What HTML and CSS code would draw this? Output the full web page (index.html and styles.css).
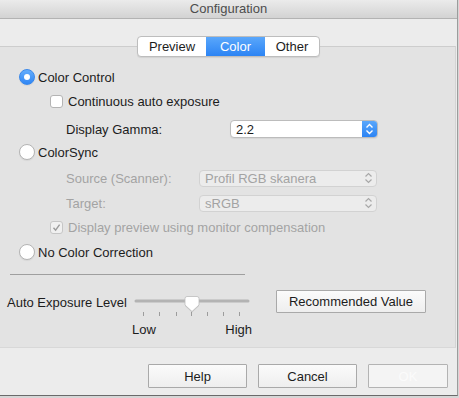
FILE: index.html
```html
<!DOCTYPE html>
<html lang="en">
<head>
    <meta charset="UTF-8">
    <title>Configuration</title>
    <link rel="stylesheet" href="styles.css">
</head>
<body>
    <div class="window">
        <div class="titlebar">Configuration</div>

        <div class="tabbar">
            <div class="tab tab-preview">Preview</div>
            <div class="tab tab-color active">Color</div>
            <div class="tab tab-other">Other</div>
        </div>

        <div class="panel">
            <div class="options">
                <div class="row r1">
                    <span class="radio checked"></span>
                    <span class="label">Color Control</span>
                </div>
                <div class="row r2 indent">
                    <span class="checkbox"></span>
                    <span class="label">Continuous auto exposure</span>
                </div>
                <div class="row r3 sub">
                    <span class="field-label gamma-label">Display Gamma:</span>
                    <div class="popup popup-gamma">
                        <span class="popup-text">2.2</span>
                        <span class="popup-arrows blue">
                            <svg width="9" height="12" viewBox="0 0 9 12"><path d="M1.5 4.5 L4.5 1.5 L7.5 4.5 M1.5 7.5 L4.5 10.5 L7.5 7.5" fill="none" stroke="#fff" stroke-width="1.4"/></svg>
                        </span>
                    </div>
                </div>
                <div class="row r4">
                    <span class="radio"></span>
                    <span class="label">ColorSync</span>
                </div>
                <div class="row r5 sub disabled">
                    <span class="field-label sync-label">Source (Scanner):</span>
                    <div class="popup popup-sync">
                        <span class="popup-text">Profil RGB skanera</span>
                        <span class="popup-arrows">
                            <svg width="9" height="12" viewBox="0 0 9 12"><path d="M1.5 4.5 L4.5 1.5 L7.5 4.5 M1.5 7.5 L4.5 10.5 L7.5 7.5" fill="none" stroke="#a8a8a8" stroke-width="1.2"/></svg>
                        </span>
                    </div>
                </div>
                <div class="row r6 sub disabled">
                    <span class="field-label sync-label">Target:</span>
                    <div class="popup popup-sync">
                        <span class="popup-text">sRGB</span>
                        <span class="popup-arrows">
                            <svg width="9" height="12" viewBox="0 0 9 12"><path d="M1.5 4.5 L4.5 1.5 L7.5 4.5 M1.5 7.5 L4.5 10.5 L7.5 7.5" fill="none" stroke="#a8a8a8" stroke-width="1.2"/></svg>
                        </span>
                    </div>
                </div>
                <div class="row r7 indent disabled">
                    <span class="checkbox checked">
                        <svg width="11" height="11" viewBox="0 0 11 11"><path d="M2.5 5.8 L4.6 8.2 L8.6 2.6" fill="none" stroke="#9a9a9a" stroke-width="1.4"/></svg>
                    </span>
                    <span class="label">Display preview using monitor compensation</span>
                </div>
                <div class="row r8">
                    <span class="radio"></span>
                    <span class="label">No Color Correction</span>
                </div>
            </div>

            <div class="separator"></div>

            <div class="exposure">
                <span class="exposure-label">Auto Exposure Level</span>
                <svg class="slider" width="116" height="28" viewBox="0 0 116 28">
                    <line x1="2" y1="11" x2="114" y2="11" stroke="#b3b3b3" stroke-width="3" stroke-linecap="round"/>
                    <g stroke="#9c9c9c" stroke-width="1">
                        <line x1="9.5" y1="22" x2="9.5" y2="26"/>
                        <line x1="25.5" y1="22" x2="25.5" y2="26"/>
                        <line x1="42.5" y1="22" x2="42.5" y2="26"/>
                        <line x1="57.5" y1="22" x2="57.5" y2="26"/>
                        <line x1="73.5" y1="22" x2="73.5" y2="26"/>
                        <line x1="89.5" y1="22" x2="89.5" y2="26"/>
                        <line x1="105.5" y1="22" x2="105.5" y2="26"/>
                    </g>
                    <path d="M53 6.5 H63 Q65 6.5 65 8.5 V15 L58 21.5 L51 15 V8.5 Q51 6.5 53 6.5 Z" fill="#000" opacity="0.12" transform="translate(0 1)"/>
                    <path d="M53 6.5 H63 Q65 6.5 65 8.5 V15 L58 21.5 L51 15 V8.5 Q51 6.5 53 6.5 Z" fill="#fff" stroke="#bcbcbc" stroke-width="0.8"/>
                </svg>
                <button class="btn recommended">Recommended Value</button>
                <div class="slider-labels">
                    <span>Low</span>
                    <span>High</span>
                </div>
            </div>
        </div>

        <div class="footer">
            <button class="btn footer-btn">Help</button>
            <button class="btn footer-btn">Cancel</button>
            <button class="btn footer-btn ok" disabled>OK</button>
        </div>
    </div>
</body>
</html>
```

FILE: styles.css
```css
* {
    margin: 0;
    padding: 0;
    box-sizing: border-box;
}

body {
    font-family: "Liberation Sans", Arial, sans-serif;
    font-size: 13px;
    color: #1c1c1c;
    background: #d6d6d6;
    width: 459px;
    height: 398px;
    overflow: hidden;
}

.window {
    width: 458px;
    height: 396px;
    background: #ececec;
    border-right: 1px solid #9c9c9c;
    border-bottom: 1px solid #6a6a6a;
    display: flex;
    flex-direction: column;
}

.titlebar {
    height: 19px;
    line-height: 18px;
    text-align: center;
    color: #4d4d4d;
    background: linear-gradient(#ebebeb, #d3d3d3);
    border-bottom: 1px solid #b3b3b3;
}

/* segmented tabs */
.tabbar {
    display: flex;
    margin: 17px 0 0 137px;
    height: 21px;
    width: 183px;
    border: 1px solid #bdbdbd;
    border-radius: 4px;
    background: #fff;
    overflow: hidden;
    position: relative;
    z-index: 1;
    box-shadow: 0 1px 1px rgba(0, 0, 0, 0.08);
}

.tab {
    display: flex;
    align-items: center;
    justify-content: center;
    color: #1c1c1c;
}

.tab-preview { width: 68px; }
.tab-color { width: 59px; }
.tab-other { flex: 1; }

.tab.active {
    color: #fff;
    background: linear-gradient(#5aa7fb, #2c84f4);
}

/* tab content box */
.panel {
    margin-top: -11px;
    height: 302px;
    background: #e3e3e3;
    border-top: 1px solid #cdcdcd;
    border-right: 1px solid #d4d4d4;
    margin-right: 1px;
    border-bottom: 1px solid #d8d8d8;
}

.options {
    padding: 20px 0 0 19px;
}

.row {
    display: flex;
    align-items: center;
    height: 20px;
}

.r2 { margin-top: 4px; }
.r3 { margin-top: 8px; }
.r4 { margin-top: 3px; }
.r5 { margin-top: 6px; }
.r6 { margin-top: 5px; }
.r7 { margin-top: 4px; }
.r8 { margin-top: 5px; }

.indent { padding-left: 31px; }
.sub { padding-left: 47px; }

.disabled { color: #a3a3a3; }

.radio {
    width: 16px;
    height: 16px;
    border-radius: 50%;
    background: #fff;
    border: 1px solid #b4b4b4;
    margin-right: 3px;
    display: flex;
    align-items: center;
    justify-content: center;
    box-shadow: 0 1px 1px rgba(0, 0, 0, 0.06);
}

.radio.checked {
    background: linear-gradient(#64adfc, #2f86f5);
    border-color: #3a88ea;
}

.radio.checked::after {
    content: "";
    width: 6px;
    height: 6px;
    border-radius: 50%;
    background: #fff;
}

.checkbox {
    width: 13px;
    height: 13px;
    border-radius: 3px;
    background: #fff;
    border: 1px solid #b4b4b4;
    margin-right: 5px;
    display: flex;
    align-items: center;
    justify-content: center;
}

.checkbox.checked {
    background: #f0f0f0;
    border-color: #c6c6c6;
}

.field-label { display: block; }
.gamma-label { width: 164px; }
.sync-label { width: 133px; }

.popup {
    display: flex;
    align-items: center;
    height: 18px;
    border-radius: 4px;
    background: #fff;
    border: 1px solid #bcbcbc;
    overflow: hidden;
    box-shadow: 0 1px 1px rgba(0, 0, 0, 0.06);
}

.popup-gamma { width: 148px; }

.popup-sync {
    width: 178px;
    height: 17px;
    background: #ececec;
    border-color: #d2d2d2;
    box-shadow: none;
}

.popup-text {
    flex: 1;
    padding-left: 5px;
}

.popup-arrows {
    width: 15px;
    height: 100%;
    display: flex;
    align-items: center;
    justify-content: center;
}

.popup-arrows.blue {
    background: linear-gradient(#5aa7fb, #2c84f4);
}

.separator {
    margin: 12px 0 0 10px;
    width: 235px;
    height: 1px;
    background: #9f9f9f;
}

/* exposure slider */
.exposure {
    display: grid;
    grid-template-columns: 127px 116px 150px;
    column-gap: 0;
    grid-template-rows: 28px 26px;
    margin-top: 15px;
    padding-left: 7px;
}

.exposure-label {
    height: 24px;
    display: flex;
    align-items: center;
}

.slider {
    display: block;
}

.recommended {
    margin-left: 26px;
    height: 23px;
    width: 150px;
}

.slider-labels {
    grid-column: 2;
    display: flex;
    justify-content: space-between;
    align-items: center;
    margin-left: -2px;
    width: 120px;
    margin-top: -4px;
}

.btn {
    font-family: inherit;
    font-size: 13px;
    color: #1c1c1c;
    background: linear-gradient(#fbfbfb, #eeeeee);
    border: 1px solid #a9a9a9;
    border-radius: 1px;
}

.footer {
    flex: 1;
    display: flex;
    justify-content: flex-end;
    align-items: flex-start;
    gap: 11px;
    padding: 16px 9px 0 0;
}

.footer-btn {
    width: 99px;
    height: 24px;
}

.footer-btn.ok {
    width: 80px;
    color: #fbfbfb;
    background: #f4f4f4;
    border-color: #b3b3b3;
}
```
